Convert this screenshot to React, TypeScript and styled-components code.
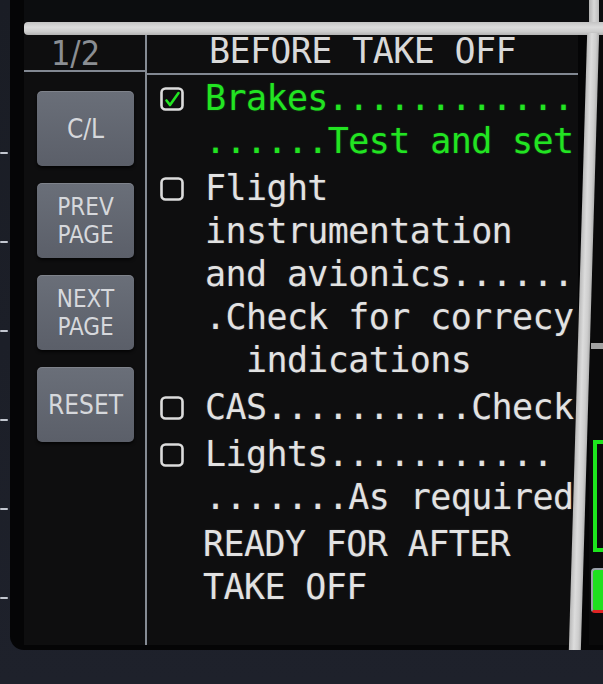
import React from "react";
import styled, { createGlobalStyle } from "styled-components";

const GlobalStyle = createGlobalStyle`
  html, body {
    margin: 0;
    padding: 0;
    background: #1b1e27;
  }
  body {
    font-family: "DejaVu Sans Mono", "Liberation Mono", monospace;
  }
`;

type CheckItem = { done?: boolean; lines: string[] };

const items: CheckItem[] = [
  { done: true, lines: ["Brakes............", "......Test and set"] },
  {
    lines: [
      "Flight",
      "instrumentation",
      "and avionics......",
      ".Check for correcy",
      "  indications",
    ],
  },
  { lines: ["CAS..........Check"] },
  { lines: ["Lights...........", ".......As required"] },
];

const softKeys = [["C/L"], ["PREV", "PAGE"], ["NEXT", "PAGE"], ["RESET"]];

const Device = styled.div`
  width: 603px;
  height: 684px;
  overflow: hidden;
  display: flex;
  flex-direction: column;
  background: linear-gradient(180deg, #1a1d25 0%, #1e212b 100%);
`;

const MainRow = styled.div`
  display: flex;
  height: 650px;
  flex-shrink: 0;
`;

const Rail = styled.div`
  width: 10px;
  flex-shrink: 0;
  display: flex;
  flex-direction: column;
  gap: 87px;
  padding-top: 152px;
  box-sizing: border-box;
`;

const Tick = styled.span`
  display: block;
  width: 8px;
  height: 2px;
  background: #c3c7d0;
  border-radius: 1px;
`;

const Bezel = styled.div`
  flex: 1;
  min-width: 0;
  display: flex;
  flex-direction: column;
  background: #050506;
  border-bottom-left-radius: 14px;
  padding: 0 0 5px 14px;
`;

const TopStrip = styled.div`
  height: 22px;
  flex-shrink: 0;
  display: flex;
  justify-content: flex-end;
  background: #0c0d0f;
`;

const TopPost = styled.div`
  width: 10px;
  margin-right: 4px;
  background: linear-gradient(90deg, #b2b2b2, #d8d8d8 50%, #bcbcbc);
`;

const HBar = styled.div`
  position: relative;
  z-index: 1;
  height: 13px;
  flex-shrink: 0;
  border-radius: 4px 0 0 4px;
  background: linear-gradient(
    180deg,
    #c4c4c4 0%,
    #dcdcdc 40%,
    #cccccc 75%,
    #b2b2b2 100%
  );
`;

const Body = styled.div`
  flex: 1;
  min-height: 0;
  display: flex;
`;

const Screen = styled.div`
  flex: 1;
  min-width: 0;
  display: grid;
  grid-template-columns: 121px 2px minmax(0, 1fr);
  background: #0e0e0f;
`;

const LeftCol = styled.div`
  display: flex;
  flex-direction: column;
`;

const PageHeader = styled.div`
  height: 35px;
  border-bottom: 2px solid #828892;
  display: flex;
  align-items: center;
  justify-content: center;
  padding-right: 18px;
  font-family: "DejaVu Sans Condensed", "DejaVu Sans", sans-serif;
  font-stretch: condensed;
  font-size: 34px;
  color: #8b8e93;
`;

const KeyStack = styled.div`
  display: flex;
  flex-direction: column;
  gap: 17px;
  padding: 19px 11px 0 13px;
`;

const SoftKey = styled.button<{ $size: number }>`
  width: 97px;
  height: 75px;
  padding: 0;
  border: none;
  border-radius: 5px;
  display: flex;
  flex-direction: column;
  align-items: center;
  justify-content: center;
  background: linear-gradient(180deg, #6a6f79 0%, #5b5f69 100%);
  box-shadow: inset 0 1px 0 rgba(255, 255, 255, 0.14),
    0 2px 3px rgba(0, 0, 0, 0.7);
  color: #d6d8dc;
  font-family: "DejaVu Sans Condensed", "DejaVu Sans", sans-serif;
  font-stretch: condensed;
  font-size: ${(p) => p.$size}px;
`;

const KeyRow = styled.span`
  display: block;
  line-height: 28px;
`;

const Divider = styled.div`
  background: #858b94;
`;

const RightCol = styled.div`
  display: flex;
  flex-direction: column;
  min-width: 0;
`;

const TitleBar = styled.div`
  height: 38px;
  line-height: 33px;
  border-bottom: 2px solid #828892;
  text-align: center;
  font-size: 35px;
  letter-spacing: -0.6px;
  color: #d9d9d9;
  white-space: pre;
`;

const CheckList = styled.div`
  display: flex;
  flex-direction: column;
  gap: 4px;
  padding: 2px 0 0 13px;
`;

const Item = styled.div`
  display: flex;
  gap: 21px;
`;

const BoxCell = styled.div`
  width: 24px;
  height: 43px;
  flex-shrink: 0;
  display: flex;
  align-items: center;
`;

const Lines = styled.div`
  display: flex;
  flex-direction: column;
`;

const Line = styled.div<{ $done?: boolean }>`
  font-size: 35px;
  line-height: 43px;
  letter-spacing: -0.6px;
  white-space: pre;
  color: ${(p) => (p.$done ? "#22e422" : "#e2e2e2")};
  text-shadow: 0 0 2px
    ${(p) => (p.$done ? "rgba(34,228,34,0.35)" : "rgba(255,255,255,0.2)")};
`;

const NoteBlock = styled.div`
  padding-left: 43px;
`;

const VBar = styled.div`
  position: relative;
  z-index: 2;
  width: 12px;
  flex-shrink: 0;
  margin: -2px -1px -5px 0;
  transform: skewX(-1.7deg);
  background: linear-gradient(
    90deg,
    #b8b8b8 0%,
    #dcdcdc 40%,
    #cdcdcd 75%,
    #b0b0b0 100%
  );
`;

const SidePanel = styled.div`
  width: 14px;
  flex-shrink: 0;
  display: flex;
  flex-direction: column;
  padding-top: 308px;
  box-sizing: border-box;
  overflow: hidden;
  background: #0a0a0b;
`;

const SideRule = styled.div`
  height: 6px;
  margin-left: 2px;
  background: #a3a3a3;
`;

const GaugeFrame = styled.div`
  height: 112px;
  margin: 91px 0 0 4px;
  box-sizing: border-box;
  border: 4px solid #1de51d;
  border-right: none;
`;

const Pill = styled.div`
  height: 45px;
  margin: 16px 0 0 2px;
  box-sizing: border-box;
  border: 2px solid #9aa1aa;
  border-right: none;
  border-bottom: 3px solid #e02424;
  border-radius: 4px 0 0 4px;
  background: #1fe01f;
`;

const Chin = styled.div`
  flex: 1;
`;

const CheckBox = ({ done }: { done?: boolean }) => (
  <svg width="24" height="24" viewBox="0 0 24 24">
    <rect
      x="1.5"
      y="1.5"
      width="21"
      height="21"
      rx="4"
      fill="none"
      stroke="#dcdcdc"
      strokeWidth="2.6"
    />
    {done && (
      <path
        d="M6.5 13.5 L10 18 L18.5 6"
        fill="none"
        stroke="#22e422"
        strokeWidth="2.6"
        strokeLinecap="round"
        strokeLinejoin="round"
      />
    )}
  </svg>
);

export default function App() {
  return (
    <Device>
      <GlobalStyle />
      <MainRow>
        <Rail>
          {[0, 1, 2, 3, 4, 5].map((i) => (
            <Tick key={i} />
          ))}
        </Rail>
        <Bezel>
          <TopStrip>
            <TopPost />
          </TopStrip>
          <HBar />
          <Body>
            <Screen>
              <LeftCol>
                <PageHeader>1/2</PageHeader>
                <KeyStack>
                  {softKeys.map((label) => (
                    <SoftKey
                      key={label.join(" ")}
                      type="button"
                      $size={label.length > 1 ? 24 : 26}
                    >
                      {label.map((row) => (
                        <KeyRow key={row}>{row}</KeyRow>
                      ))}
                    </SoftKey>
                  ))}
                </KeyStack>
              </LeftCol>
              <Divider />
              <RightCol>
                <TitleBar>BEFORE TAKE OFF</TitleBar>
                <CheckList>
                  {items.map((item, i) => (
                    <Item key={i}>
                      <BoxCell>
                        <CheckBox done={item.done} />
                      </BoxCell>
                      <Lines>
                        {item.lines.map((text, j) => (
                          <Line key={j} $done={item.done}>
                            {text}
                          </Line>
                        ))}
                      </Lines>
                    </Item>
                  ))}
                  <NoteBlock>
                    <Line>READY FOR AFTER</Line>
                    <Line>TAKE OFF</Line>
                  </NoteBlock>
                </CheckList>
              </RightCol>
            </Screen>
            <VBar />
            <SidePanel>
              <SideRule />
              <GaugeFrame />
              <Pill />
            </SidePanel>
          </Body>
        </Bezel>
      </MainRow>
      <Chin />
    </Device>
  );
}
